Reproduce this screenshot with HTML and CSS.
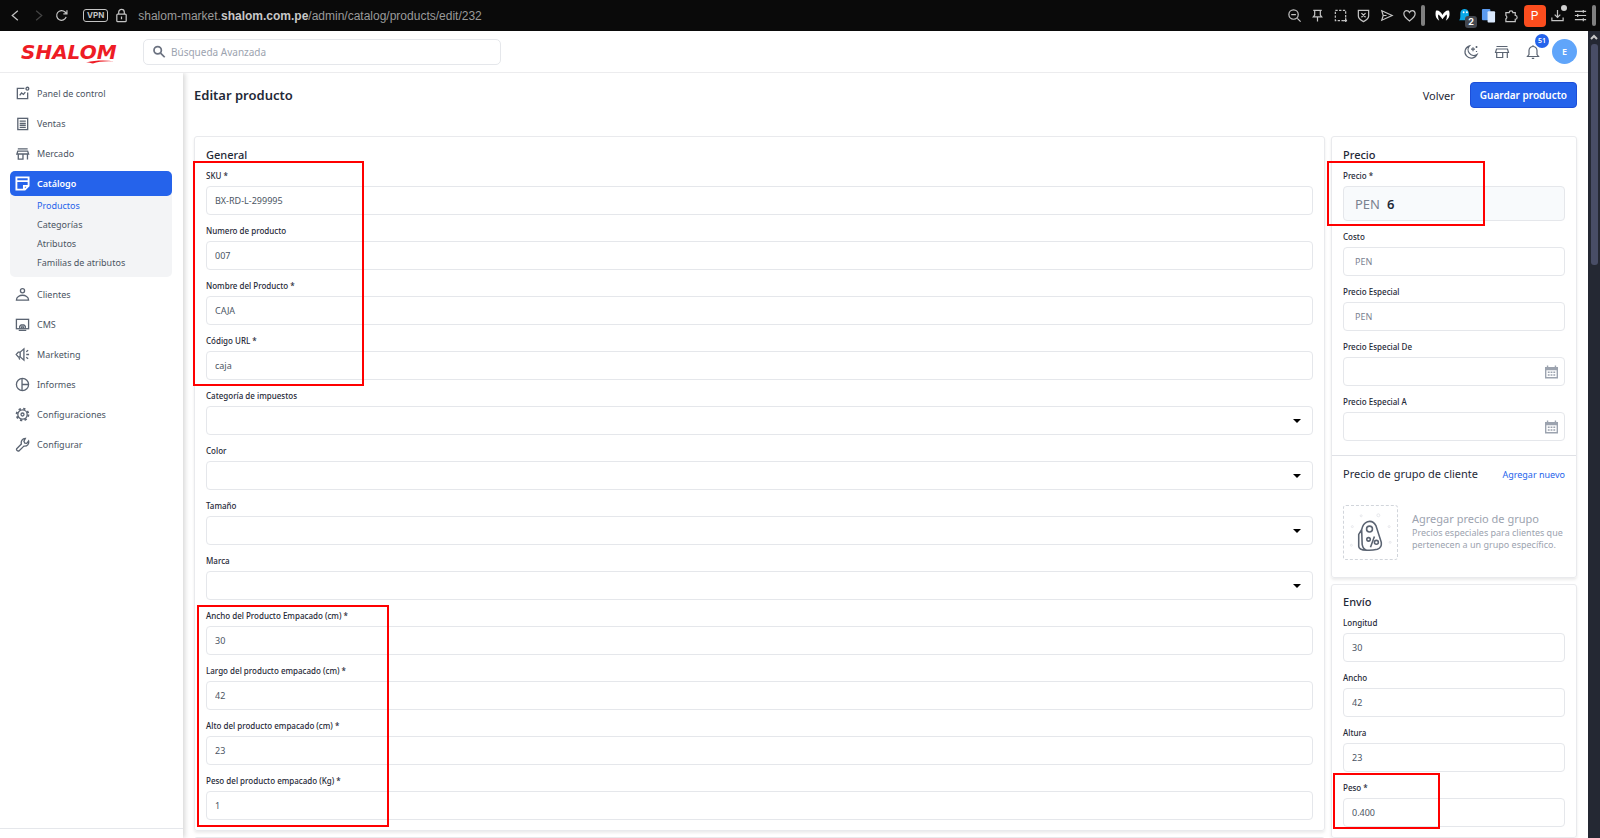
FILE: index.html
```
<!DOCTYPE html>
<html lang="es">
<head>
    <meta charset="utf-8">
    <title>Editar producto</title>
    <link rel="stylesheet" href="styles.css">
</head>
<body>
    <div class="browser">
        <button class="tool" aria-label="Atrás"><svg viewBox="0 0 16 16"><path d="M10.500 3L4.500 8l6 5"/></svg></button>
        <button class="tool dim" aria-label="Adelante"><svg viewBox="0 0 16 16"><path d="M5.500 3l6 5-6 5"/></svg></button>
        <button class="tool" aria-label="Recargar"><svg viewBox="0 0 16 16"><path d="M13 9.500A5.200 5.200 0 1 1 11.800 4.300L13.500 6M13.800 2.500V6.200H10"/></svg></button>
        <span class="vpn">VPN</span>
        <span class="lock"><svg viewBox="0 0 16 16"><rect x="3" y="6.500" width="10" height="8" rx="1"/><path d="M5 6.500V4.500a3 3 0 0 1 6 0v2M8 9v3"/></svg></span>
        <div class="url">shalom-market.<b>shalom.com.pe</b>/admin/catalog/products/edit/232</div>
        <button class="tool" aria-label="Alejar"><svg viewBox="0 0 16 16"><circle cx="7" cy="7" r="5"/><path d="M4.500 7h5M11 11l3.500 3.500"/></svg></button>
        <button class="tool" aria-label="Fijar"><svg viewBox="0 0 16 16"><path d="M3.500 2.500h9M5 2.500v5L3.500 9.500h9L11 7.500v-5M8 9.500v5"/></svg></button>
        <button class="tool" aria-label="Captura"><svg viewBox="0 0 16 16"><rect x="2.500" y="2.500" width="11" height="11" stroke-dasharray="2.500 1.500"/><path d="M11 13.500h4M13.500 11v4"/></svg></button>
        <button class="tool" aria-label="Escudo"><svg viewBox="0 0 16 16"><path d="M2.500 2.500h11v6c0 3-2.500 4.500-5.500 6-3-1.500-5.500-3-5.500-6zM5.800 5.500l4.400 4.400M10.200 5.500L5.800 9.900"/></svg></button>
        <button class="tool" aria-label="Enviar"><svg viewBox="0 0 16 16"><path d="M3 3l11 5-11 5 1.500-5zM4.500 8H8"/></svg></button>
        <button class="tool" aria-label="Favorito"><svg viewBox="0 0 16 16"><path d="M8 13.800C4 11 2 9 2 6.200 2 4 3.500 2.800 5 2.800c1.300 0 2.400.8 3 2 .6-1.200 1.700-2 3-2 1.500 0 3 1.200 3 3.400 0 2.800-2 4.800-6 7.600z"/></svg></button>
        <span class="split"></span>
        <button class="tool" aria-label="Extensión M"><svg viewBox="0 0 16 16"><path class="white" d="M1 3c2-1 5 .5 7 4.500C10 3.500 13 2 15 3c1.200 4 .5 8-3.500 10.500 1-2 1.500-4 1-6.500-1.500 1-3 3-4.500 5C6.500 10 5 8 3.500 7c-.5 2.500 0 4.500 1 6.500C.5 11 0 7 1 3z"/></svg></button>
        <button class="tool ghost" aria-label="Bloqueador"><svg viewBox="0 0 16 16"><path class="cyan" d="M1 13c1.500-1 1.500-3 1.500-7a4.500 4.500 0 0 1 9-1v8z"/><circle class="white" cx="6" cy="4.500" r="1"/><circle class="white" cx="9.500" cy="4.500" r="1"/></svg><span class="count">2</span></button>
        <button class="tool" aria-label="Traductor"><svg viewBox="0 0 16 16"><rect class="sky" x="1" y="1" width="9" height="12" rx="1"/><rect class="pale" x="7" y="3.500" width="8" height="12" rx="1"/></svg></button>
        <button class="tool" aria-label="Extensiones"><svg viewBox="0 0 16 16"><path d="M2 5h3.500a2 2 0 1 1 4 0H12v3a2 2 0 1 1 0 4v2.500H2V11.500a2 2 0 0 0 0-3.500z"/></svg></button>
        <button class="tool" aria-label="Perfil"><span class="profile">P</span></button>
        <button class="tool download" aria-label="Descargas"><svg viewBox="0 0 16 16"><path d="M8 2v8M5 7l3 3 3-3M2 10v3.500h12V10"/></svg></button>
        <button class="tool" aria-label="Menú"><svg viewBox="0 0 16 16"><path d="M2 3.500h12M2 8h12M2 12.500h12M11 2v3M5 6.500v3M11 11v3"/></svg></button>
        <span class="split"></span>
    </div>

    <div class="window">
        <div class="app">
            <header class="topbar">
                <a class="logo" href="#">SHALOM
                    <svg viewBox="0 0 30 5"><path d="M0 3.500C10 1 20 1 29 2.500 20 2 12 2.500 7 4.500 5 4 3 3.500 0 3.500z"/></svg>
                </a>
                <label class="search">
                    <svg viewBox="0 0 16 16"><circle cx="6.500" cy="6" r="4.200"/><path d="M9.800 9.300l4.700 4.700"/></svg>
                    <input type="search" placeholder="Búsqueda Avanzada" aria-label="Búsqueda Avanzada">
                </label>
                <nav class="actions">
                    <button aria-label="Modo oscuro"><svg viewBox="0 0 16 16"><path d="M6.500 1.800A6.300 6.300 0 1 0 14 10.500 5.800 5.800 0 0 1 6.500 1.800zM10 3.200v4M8 5.200h4M13.500 2v2M12.500 3h2M13.500 7v1"/></svg></button>
                    <button aria-label="Tienda"><svg viewBox="0 0 16 16"><path d="M2.500 2.500h11M2.500 5h11l1 3.500h-13zM2.700 8.500v5h6v-5M13.300 8.500v5.500"/></svg></button>
                    <button class="bell" aria-label="Notificaciones"><svg viewBox="0 0 16 16"><path d="M2.500 12.500h11L12 10.500v-4a4 4 0 0 0-8 0v4zM8 2.500V1.200M6.800 14.300h2.400"/></svg><span class="badge">51</span></button>
                    <button class="avatar">E</button>
                </nav>
            </header>

            <div class="body">
                <nav class="sidebar">
                    <a class="item" href="#"><svg viewBox="0 0 16 16"><path d="M10 2.500H2.500v11h11V7M5 10l2-2.500L9 9l2-2.500"/><circle cx="13.200" cy="2.800" r="1.500"/></svg>Panel de control</a>
                    <a class="item" href="#"><svg viewBox="0 0 16 16"><rect x="3" y="2.500" width="10.500" height="12"/><path d="M5 5.500h6.500M5 8h6.500M5 10h6.500M5 12.200h6.500"/></svg>Ventas</a>
                    <a class="item" href="#"><svg viewBox="0 0 16 16"><path d="M3 3h10.500M3 5.500h10.500l1 3h-12.500zM3.500 8.500v5.500h5V8.500M13.300 8.500v6"/></svg>Mercado</a>
                    <div class="group">
                        <a class="item active" href="#"><svg viewBox="0 0 16 16"><path d="M1.500 1.500h13v9l-4 4h-9zM1.500 5.500h13M9.500 14.500v-4h5"/></svg>Catálogo</a>
                        <a class="sub current" href="#">Productos</a>
                        <a class="sub" href="#">Categorías</a>
                        <a class="sub" href="#">Atributos</a>
                        <a class="sub" href="#">Familias de atributos</a>
                    </div>
                    <a class="item" href="#"><svg viewBox="0 0 16 16"><circle cx="8" cy="4" r="2.200"/><path d="M1.500 14C1.500 10.500 5 8.800 8 8.800s6.500 1.700 6.500 5.200z"/></svg>Clientes</a>
                    <a class="item" href="#"><svg viewBox="0 0 16 16"><rect x="1.500" y="2.500" width="13" height="10"/><path d="M4 14.300h8M5 12v-2l1.500-1.500h3L11 10v2M7 12v-1.500h2V12"/></svg>CMS</a>
                    <a class="item" href="#"><svg viewBox="0 0 16 16"><path d="M9.500 2v12L5.500 10.500h-2L1.300 8l2.200-2.500h2zM4 10.500l1 3M12 5l2-1.500M12 8h3M12 11l2 1.500M5.500 5.500v5"/></svg>Marketing</a>
                    <a class="item" href="#"><svg viewBox="0 0 16 16"><circle cx="8" cy="8" r="6.500"/><path d="M7.500 1.500v13M7.500 8h7"/></svg>Informes</a>
                    <a class="item" href="#"><svg viewBox="0 0 16 16"><circle cx="8" cy="8" r="5"/><circle cx="8" cy="8" r="1.600"/><circle cx="8" cy="8" r="6.300" stroke-dasharray="2.400 2.548" stroke-width="2"/></svg>Configuraciones</a>
                    <a class="item" href="#"><svg viewBox="0 0 16 16"><path d="M1.800 12.500l5-5c-.8-3 1.200-5.800 4.200-6L9.500 4.500l1 2 2 .3 2-2.500c.8 3-1.500 6-5 5.400l-5 5c-1.800.8-3.400-.6-2.700-2.200z"/></svg>Configurar</a>
                    <div class="foot"></div>
                </nav>

                <main class="content">
                    <div class="heading">
                        <h1>Editar producto</h1>
                        <a class="back" href="#">Volver</a>
                        <button class="save">Guardar producto</button>
                    </div>

                    <form class="columns">
                        <div class="column wide">
                            <section class="card general">
                                <h2>General</h2>
                                <div class="field"><label for="sku">SKU *</label><input class="box" id="sku" value="BX-RD-L-299995"></div>
                                <div class="field"><label for="numero">Numero de producto</label><input class="box" id="numero" value="007"></div>
                                <div class="field"><label for="nombre">Nombre del Producto *</label><input class="box" id="nombre" value="CAJA"></div>
                                <div class="field"><label for="codigo">Código URL *</label><input class="box" id="codigo" value="caja"></div>
                                <div class="field"><label for="impuestos">Categoría de impuestos</label><div class="drop"><select class="box" id="impuestos"><option></option></select></div></div>
                                <div class="field"><label for="color">Color</label><div class="drop"><select class="box" id="color"><option></option></select></div></div>
                                <div class="field"><label for="tamano">Tamaño</label><div class="drop"><select class="box" id="tamano"><option></option></select></div></div>
                                <div class="field"><label for="marca">Marca</label><div class="drop"><select class="box" id="marca"><option></option></select></div></div>
                                <div class="field"><label for="anchoemp">Ancho del Producto Empacado (cm) *</label><input class="box" id="anchoemp" value="30"></div>
                                <div class="field"><label for="largoemp">Largo del producto empacado (cm) *</label><input class="box" id="largoemp" value="42"></div>
                                <div class="field"><label for="altoemp">Alto del producto empacado (cm) *</label><input class="box" id="altoemp" value="23"></div>
                                <div class="field"><label for="pesoemp">Peso del producto empacado (Kg) *</label><input class="box" id="pesoemp" value="1"></div>
                                <div class="mark mark-ids"></div>
                                <div class="mark mark-package"></div>
                            </section>
                            <section class="card next"></section>
                        </div>

                        <div class="column side">
                            <section class="card prices">
                                <h2>Precio</h2>
                                <div class="field"><label for="precio">Precio *</label><div class="box money big"><span>PEN</span><input id="precio" value="6"></div></div>
                                <div class="field"><label for="costo">Costo</label><div class="box money"><span>PEN</span><input id="costo"></div></div>
                                <div class="field"><label for="especial">Precio Especial</label><div class="box money"><span>PEN</span><input id="especial"></div></div>
                                <div class="field"><label for="desde">Precio Especial De</label><div class="box money"><input id="desde"><svg class="cal" viewBox="0 0 14 14"><path d="M0 1.500h2V0h1.500v1.500h7V0H12v1.500h2V14H0zM1.500 5v7.500h11V5z"/><path d="M3 6.500h2v1.500H3zM6 6.500h2v1.500H6zM9 6.500h2v1.500H9zM3 9.500h2v1.500H3zM6 9.500h2v1.500H6zM9 9.500h2v1.500H9z"/></svg></div></div>
                                <div class="field"><label for="hasta">Precio Especial A</label><div class="box money"><input id="hasta"><svg class="cal" viewBox="0 0 14 14"><path d="M0 1.500h2V0h1.500v1.500h7V0H12v1.500h2V14H0zM1.500 5v7.500h11V5z"/><path d="M3 6.500h2v1.500H3zM6 6.500h2v1.500H6zM9 6.500h2v1.500H9zM3 9.500h2v1.500H3zM6 9.500h2v1.500H6zM9 9.500h2v1.500H9z"/></svg></div></div>
                                <div class="customers">
                                    <div class="customers-head"><h2>Precio de grupo de cliente</h2><a href="#">Agregar nuevo</a></div>
                                    <div class="empty">
                                        <div class="tag"><svg viewBox="0 0 54 54"><path d="M23 45c-3-1-4-3-4.500-6L18 24c1-5 3-7 6-8 4-1 7 1 8.500 4l5.500 17c.5 4-1 6-4 7-4 1-7 1.500-11 1zM18 24l-3 5v12c0 3 3 4 8 4M31 31l-4 11"/><circle cx="26" cy="23.500" r="3"/><circle cx="25" cy="34" r="1.800"/><circle cx="33" cy="37" r="2"/><g><circle cx="17.500" cy="10" r="1"/><circle cx="35" cy="9.500" r="1.500"/><circle cx="8.500" cy="21" r="1"/><circle cx="46" cy="21" r="1"/><circle cx="7.500" cy="40" r="1"/><circle cx="47" cy="37" r="1"/></g></svg></div>
                                        <div class="empty-text">
                                            <h3>Agregar precio de grupo</h3>
                                            <p>Precios especiales para clientes que pertenecen a un grupo específico.</p>
                                        </div>
                                    </div>
                                </div>
                                <div class="mark mark-price"></div>
                            </section>

                            <section class="card shipping">
                                <h2>Envío</h2>
                                <div class="field"><label for="longitud">Longitud</label><input class="box" id="longitud" value="30"></div>
                                <div class="field"><label for="ancho">Ancho</label><input class="box" id="ancho" value="42"></div>
                                <div class="field"><label for="altura">Altura</label><input class="box" id="altura" value="23"></div>
                                <div class="field"><label for="peso">Peso *</label><input class="box" id="peso" value="0.400"></div>
                                <div class="mark mark-weight"></div>
                            </section>
                        </div>
                    </form>
                </main>
            </div>
        </div>
        <div class="scrollbar">
            <svg viewBox="0 0 12 12"><path d="M3 7.500l3-3 3 3"/></svg>
            <div class="thumb"></div>
        </div>
    </div>
</body>
</html>
```
FILE: styles.css
```
*
{
    box-sizing: border-box;
}

body
{
    margin: 0;
    height: 100vh;
    display: flex;
    flex-direction: column;
    overflow: hidden;
    font-family: "Noto Sans", sans-serif;
    font-size: 9px;
    color: #4b5563;
    background-color: white;
}

button, input, select
{
    font: inherit;
    color: inherit;
    margin: 0;
    padding: 0;
    border: none;
    outline: none;
    background: none;
}

a
{
    color: inherit;
    text-decoration: none;
}

h1, h2, h3, p
{
    margin: 0;
}

svg
{
    display: block;
    fill: none;
    stroke: currentColor;
}

/* browser bar */
.browser
{
    flex: none;
    height: 31px;
    display: flex;
    align-items: center;
    padding: 0 4px;
    background-color: #0a0a0a;
    color: #c4c4c4;
}

.tool
{
    width: 23px;
    height: 24px;
    flex: none;
    display: flex;
    align-items: center;
    justify-content: center;
    position: relative;
}

.tool svg, .lock svg
{
    width: 15px;
    height: 15px;
    stroke-width: 1.3;
}

.dim
{
    color: #444444;
}

.vpn
{
    margin: 0 6px 0 10px;
    padding: 0 3px;
    border: 1px solid #c4c4c4;
    border-radius: 3px;
    font: bold 8px/11px Inter, sans-serif;
}

.url
{
    flex: 1;
    margin-left: 9px;
    font: 12px/16px "Liberation Sans", sans-serif;
    color: #9a9a9a;
}

.url b
{
    color: #c8c8c8;
}

.split
{
    width: 4px;
    height: 21px;
    border-radius: 2px;
    background-color: #808080;
}

.split:not(:last-child)
{
    margin-right: 6px;
}

.tool .white
{
    fill: white;
    stroke: none;
}

.tool .cyan
{
    fill: #0aa8e8;
    stroke: none;
}

.tool .sky
{
    fill: #5b9bf0;
    stroke: none;
}

.tool .pale
{
    fill: #dbeafe;
    stroke: none;
}

.count
{
    position: absolute;
    right: 0;
    bottom: 0;
    width: 12px;
    border-radius: 3px;
    background-color: #444850;
    color: white;
    font: bold 9px/12px Inter, sans-serif;
}

.profile
{
    width: 22px;
    flex: none;
    border-radius: 4px;
    background-color: #fb4d1e;
    color: white;
    font: 12px/22px Roboto, sans-serif;
}

.download::after
{
    content: "";
    position: absolute;
    top: 1px;
    right: 2px;
    width: 6px;
    height: 6px;
    border-radius: 50%;
    background-color: #d0d0d0;
}

.window
{
    flex: 1;
    min-height: 0;
    display: flex;
}

.app
{
    flex: 1;
    min-width: 0;
    display: flex;
    flex-direction: column;
}

.scrollbar
{
    width: 12px;
    background-color: #242833;
    color: #c8c8c8;
}

.scrollbar svg
{
    width: 12px;
    height: 13px;
    stroke-width: 2;
}

.thumb
{
    width: 7px;
    height: 30%;
    max-height: 221px;
    margin: 0 auto;
    border-radius: 3px;
    background-color: #484d66;
}

/* app header */
.topbar
{
    flex: none;
    height: 42px;
    display: flex;
    align-items: center;
    padding: 0 11px 0 21px;
    border-bottom: 1px solid #ececee;
}

.logo
{
    position: relative;
    width: 122px;
    font: italic bold 20px/20px "DejaVu Sans", sans-serif;
    color: #ee1c25;
}

.logo svg
{
    position: absolute;
    left: 64px;
    top: 17px;
    width: 32px;
    height: 5px;
    fill: #ee1c25;
    stroke: none;
}

.search
{
    width: 358px;
    height: 26px;
    display: flex;
    align-items: center;
    gap: 5px;
    padding: 0 8px;
    border: 1px solid #e5e7eb;
    border-radius: 5px;
}

.search svg
{
    width: 14px;
    height: 14px;
    stroke-width: 2;
    color: #6b7280;
}

.search input
{
    flex: 1;
    font-size: 10px;
}

.search input::placeholder
{
    color: #9ca3af;
}

.actions
{
    margin-left: auto;
    display: flex;
    align-items: center;
    gap: 15px;
    color: #5b6472;
}

.actions svg
{
    width: 16px;
    height: 16px;
    stroke-width: 1.2;
}

.bell
{
    position: relative;
}

.badge
{
    position: absolute;
    left: 10px;
    top: -10px;
    width: 14px;
    border-radius: 50%;
    background-color: #2563eb;
    color: white;
    font-size: 7px;
    line-height: 14px;
    font-weight: 600;
}

.actions .avatar
{
    width: 25px;
    height: 25px;
    margin-left: -4px;
    border-radius: 50%;
    background-color: #60a5fa;
    color: white;
    font-weight: 600;
}

/* sidebar */
.body
{
    flex: 1;
    min-height: 0;
    display: flex;
}

.sidebar
{
    width: 183px;
    flex: none;
    display: flex;
    flex-direction: column;
    gap: 5px;
    padding: 8px 10px 0;
    box-shadow: 2px 0 5px rgba(0, 0, 0, 0.16);
    clip-path: inset(0 -10px 0 0);
}

.item
{
    height: 25px;
    display: flex;
    align-items: center;
    gap: 7px;
    padding-left: 5px;
}

.item svg
{
    width: 15px;
    height: 15px;
    stroke-width: 1.4;
    color: #5b6472;
}

.group
{
    display: flex;
    flex-direction: column;
    width: 162px;
    padding-bottom: 5px;
    border-radius: 5px;
    background-color: #f3f4f6;
}

.active
{
    border-radius: 5px;
    background-color: #2563eb;
    color: white;
    font-weight: 600;
}

.item.active svg
{
    color: white;
    stroke-width: 2;
}

.sub
{
    padding-left: 27px;
    line-height: 19px;
}

.current
{
    color: #2563eb;
}

.foot
{
    height: 10px;
    margin: auto -10px 0;
    border-top: 1px solid #e5e7eb;
}

/* content */
.content
{
    flex: 1;
    min-width: 0;
    padding: 9px 11px 0;
}

.heading
{
    display: flex;
    align-items: center;
    margin-bottom: 28px;
    color: #1f2937;
}

.heading h1
{
    flex: 1;
    font-size: 13px;
    font-weight: 600;
}

.back
{
    margin-right: 15px;
    font-size: 11px;
}

.save
{
    height: 26px;
    padding: 0 9px;
    border: 1px solid #1d4ed8;
    border-radius: 4px;
    background-color: #2563eb;
    color: white;
    font-size: 10px;
    font-weight: 600;
}

.columns
{
    display: flex;
    gap: 6px;
}

.column
{
    display: flex;
    flex-direction: column;
    gap: 6px;
}

.wide
{
    flex: 1;
    min-width: 0;
}

.side
{
    width: 246px;
    flex: none;
}

.card
{
    position: relative;
    padding: 9px 11px 0;
    border: 1px solid #e9eaed;
    border-radius: 3px;
    box-shadow: 0 2px 3px rgba(0, 0, 0, 0.08);
}

.card h2
{
    font-size: 11px;
    font-weight: 500;
    line-height: 18px;
    color: #1f2937;
}

.card > h2
{
    margin-bottom: 6px;
}

.field
{
    margin-bottom: 10px;
}

.field label
{
    display: block;
    margin-bottom: 4px;
    font-size: 8px;
    font-weight: 500;
    line-height: 12px;
    color: #1f2937;
}

.box
{
    display: block;
    width: 100%;
    height: 29px;
    padding: 0 8px;
    border: 1px solid #e5e7eb;
    border-radius: 4px;
    background-color: white;
}

.drop
{
    position: relative;
}

.drop select
{
    appearance: none;
}

.drop::after
{
    content: "";
    position: absolute;
    right: 12px;
    top: 13px;
    border: 4px solid transparent;
    border-top-color: black;
    border-bottom: none;
}

.money
{
    display: flex;
    align-items: center;
    gap: 7px;
    padding: 0 6px 0 11px;
    color: #7b8290;
}

.money input
{
    flex: 1;
    min-width: 0;
}

.big
{
    height: 35px;
    background-color: #f8fafc;
    font-size: 13px;
}

.big input
{
    color: #1f2937;
    font-weight: 600;
}

.cal
{
    width: 13px;
    height: 14px;
    fill: #9ca3af;
    fill-rule: evenodd;
    stroke: none;
}

.next
{
    height: 40px;
}

.customers
{
    margin: 14px -11px 0;
    padding: 9px 11px 17px;
    border-top: 1px solid #dfe1e6;
}

.customers-head
{
    display: flex;
    justify-content: space-between;
    align-items: center;
    margin-bottom: 22px;
}

.customers-head h2
{
    font-weight: 400;
}

.customers-head a
{
    color: #2563eb;
}

.empty
{
    display: flex;
    align-items: center;
    gap: 14px;
    color: #9ca3af;
}

.empty-text
{
    padding-bottom: 4px;
}

.tag
{
    width: 55px;
    height: 55px;
    flex: none;
    border: 1px dashed #d1d5db;
    border-radius: 3px;
    color: #5b6472;
}

.tag svg
{
    stroke-width: 1.6;
}

.tag g
{
    color: #e5e7eb;
    stroke-width: 1;
}

.empty h3
{
    font-size: 11px;
    font-weight: 400;
    line-height: 16px;
}

.empty p
{
    line-height: 12px;
}

.shipping
{
    padding-top: 8px;
}

/* red frames round the required data */
.mark
{
    position: absolute;
    border: 2px solid #ff0000;
    pointer-events: none;
}

.mark-ids
{
    left: -2px;
    top: 24px;
    width: 171px;
    height: 225px;
}

.mark-package
{
    left: 2px;
    top: 468px;
    width: 192px;
    height: 222px;
}

.mark-price
{
    left: -5px;
    top: 24px;
    width: 158px;
    height: 65px;
}

.mark-weight
{
    left: 1px;
    top: 188px;
    width: 107px;
    height: 56px;
}
```
